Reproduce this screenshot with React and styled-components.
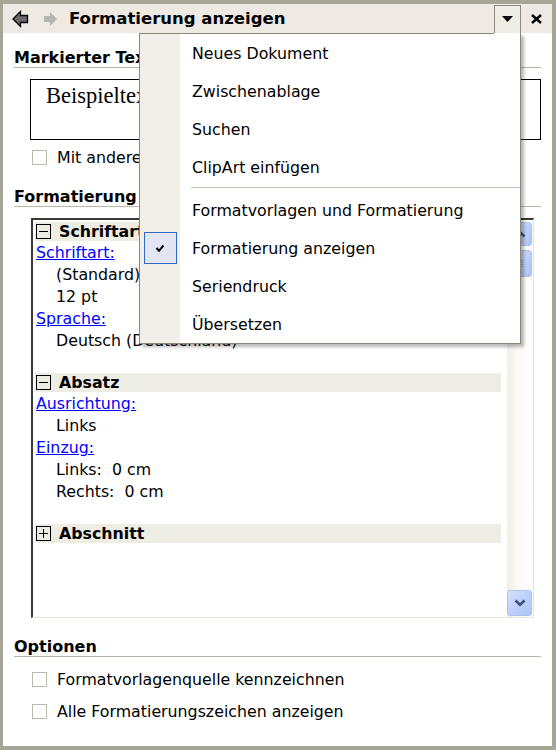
import React from 'react';
import styled, { createGlobalStyle } from 'styled-components';

const Global = createGlobalStyle`
  html, body { margin: 0; padding: 0; background: #A6A596; }
  body { font-family: "DejaVu Sans", Tahoma, sans-serif; }
`;

const Frame = styled.div`
  width: 556px;
  height: 750px;
  box-sizing: border-box;
  padding: 4px 4px 4px 3px;
  background: #A6A596;
`;

const Pane = styled.div`
  position: relative;
  height: 100%;
  background: #ffffff;
  display: flex;
  flex-direction: column;
  font-family: "DejaVu Sans", Tahoma, sans-serif;
  font-size: 15.8px;
  color: #000;
`;

const TitleBar = styled.div`
  height: 29px;
  flex: none;
  background: #EEEAE3;
  display: flex;
  align-items: center;
  padding-left: 9px;
`;

const NavIcon = styled.span`
  display: flex;
  width: 17px;
  height: 18px;
  margin-right: ${p => p.$gap}px;
`;

const Title = styled.div`
  flex: 1;
  font-weight: bold;
  font-size: 16.5px;
  white-space: nowrap;
`;

const DropButton = styled.div`
  align-self: flex-end;
  width: 27px;
  height: 28px;
  box-sizing: border-box;
  border: 1px solid #8E8B7E;
  border-bottom: none;
  background: #EEEDE4;
  display: flex;
  align-items: center;
  justify-content: center;
  position: relative;
  z-index: 3;
`;

const CloseBox = styled.div`
  width: 31px;
  display: flex;
  align-items: center;
  justify-content: center;
`;

const Body = styled.div`
  flex: 1;
  display: flex;
  flex-direction: column;
  padding: 0 11px;
`;

const Heading = styled.div`
  margin-top: ${p => p.$top}px;
  font-weight: bold;
  font-size: 16px;
  line-height: 18px;
  border-bottom: 1px solid #B8B5A8;
  white-space: nowrap;
  overflow: hidden;
`;

const SampleBox = styled.div`
  margin: 11px 0 0 16px;
  height: 61px;
  box-sizing: border-box;
  border: 1px solid #000;
  padding: 4px 15px 0;
  font-family: "Liberation Serif", "Times New Roman", serif;
  font-size: 22.5px;
  line-height: 24px;
`;

const CheckRow = styled.label`
  display: flex;
  align-items: center;
  margin-top: ${p => p.$top}px;
  margin-left: 18px;
  height: 16px;
  gap: 10px;
  white-space: nowrap;
`;

const Box = styled.span`
  width: 15px;
  height: 15px;
  box-sizing: border-box;
  border: 1px solid #BCB9AB;
  background: #fff;
  flex: none;
`;

const ListBox = styled.div`
  margin: 11px 7px 0 17px;
  height: 400px;
  box-sizing: border-box;
  border-top: 2px solid #3A3A36;
  border-left: 2px solid #3A3A36;
  border-right: 1px solid #E6E3D9;
  border-bottom: 1px solid #E6E3D9;
  display: flex;
`;

const ListContent = styled.div`
  flex: 1;
  padding: 2px 6px 0 2px;
  overflow: hidden;
`;

const SectionHead = styled.div`
  height: 19px;
  background: #EEEDE3;
  display: flex;
  align-items: center;
  font-weight: bold;
  gap: 8px;
  padding-left: 1px;
  white-space: nowrap;
`;

const Toggle = styled.span`
  width: 15px;
  height: 15px;
  box-sizing: border-box;
  border: 1px solid #000;
  position: relative;
  flex: none;
  &::before {
    content: '';
    position: absolute;
    left: 2px; right: 2px; top: 6px;
    height: 1px;
    background: #000;
  }
  &::after {
    content: '';
    display: ${p => (p.$plus ? 'block' : 'none')};
    position: absolute;
    top: 2px; bottom: 2px; left: 6px;
    width: 1px;
    background: #000;
  }
`;

const Line = styled.div`
  height: 22px;
  line-height: 24px;
  padding-left: ${p => (p.$indent ? 21 : 1)}px;
  white-space: pre;
`;

const Link = styled.a`
  color: #0000FF;
  text-decoration: underline;
`;

const ScrollBar = styled.div`
  width: 26px;
  flex: none;
  padding: 2px 1px 1px 0;
  box-sizing: border-box;
  background: linear-gradient(to right, #F1EEE6, #FBFAF6 40%, #FEFEFD);
  display: flex;
  flex-direction: column;
  gap: 4px;
`;

const ScrollBtn = styled.div`
  height: ${p => p.$h}px;
  box-sizing: border-box;
  border: 1px solid #AFC2EE;
  border-radius: 3px;
  background: linear-gradient(135deg, #D6E2FD 0%, #BED0FA 50%, #AFC5F5 100%);
  display: flex;
  align-items: center;
  justify-content: center;
`;

const Spacer = styled.div`
  flex: 1;
`;

const Menu = styled.div`
  position: absolute;
  left: 136px;
  top: 29px;
  width: 382px;
  height: 311px;
  box-sizing: border-box;
  border: 1px solid #8A8678;
  border-top: none;
  padding-top: 1px;
  background: linear-gradient(to right, #F1EFE7 0 40px, #FFFFFF 40px);
  box-shadow: 3px 3px 3px rgba(0, 0, 0, 0.28);
  z-index: 2;
  &::before {
    content: '';
    position: absolute;
    top: 0;
    left: -1px;
    right: 26px;
    height: 1px;
    background: #8A8678;
  }
`;

const MenuItem = styled.div`
  height: 38px;
  display: flex;
  align-items: center;
  white-space: nowrap;
`;

const IconSlot = styled.span`
  width: 40px;
  height: 100%;
  display: flex;
  align-items: center;
  justify-content: center;
  flex: none;
`;

const CheckMark = styled.span`
  width: 33px;
  height: 32px;
  box-sizing: border-box;
  border: 1px solid #316AC5;
  background: #E2E6F3;
  display: flex;
  align-items: center;
  justify-content: center;
`;

const MenuLabel = styled.span`
  padding-left: 12px;
`;

const Separator = styled.div`
  height: 5px;
  box-sizing: border-box;
  padding-top: 1px;
  margin-left: 51px;
  &::before {
    content: '';
    display: block;
    height: 1px;
    background: #C5C2B8;
  }
`;

const BackArrow = () => (
  <svg width="17" height="18" viewBox="0 0 17 18">
    <polygon points="1,9 8.5,1.5 8.5,5.5 15.5,5.5 15.5,12.5 8.5,12.5 8.5,16.5" fill="#6A6A6A" stroke="#000" strokeWidth="1.3" strokeLinejoin="miter" />
  </svg>
);

const FwdArrow = () => (
  <svg width="17" height="18" viewBox="0 0 17 18">
    <polygon points="15,9 8,2 8,6 2,6 2,12 8,12 8,16" fill="#B4B4B0" />
  </svg>
);

const DownTri = () => (
  <svg width="11" height="7" viewBox="0 0 11 7">
    <polygon points="0,0 11,0 5.5,6" fill="#000" />
  </svg>
);

const CloseX = () => (
  <svg width="11" height="10" viewBox="0 0 11 10">
    <path d="M1 1 L10 9 M10 1 L1 9" stroke="#000" strokeWidth="2.4" />
  </svg>
);

const Chevron = ({ up }) => (
  <svg width="12" height="8" viewBox="0 0 12 8">
    <path d={up ? 'M1.5 6.5 L6 2.2 L10.5 6.5' : 'M1.5 1.5 L6 5.8 L10.5 1.5'} fill="none" stroke="#3D5073" strokeWidth="2.6" />
  </svg>
);

const Grip = () => (
  <svg width="9" height="9" viewBox="0 0 9 9">
    {[1, 3, 5, 7].map(y => (
      <rect key={y} x="1" y={y} width="7" height="1" fill="#8DA6DD" />
    ))}
  </svg>
);

const Tick = () => (
  <svg width="10" height="9" viewBox="0 0 10 9">
    <path d="M1.5 4 L4 6.8 L8.5 1.5" fill="none" stroke="#000" strokeWidth="2" />
  </svg>
);

const topItems = ['Neues Dokument', 'Zwischenablage', 'Suchen', 'ClipArt einfügen'];
const bottomItems = [
  { label: 'Formatvorlagen und Formatierung' },
  { label: 'Formatierung anzeigen', checked: true },
  { label: 'Seriendruck' },
  { label: 'Übersetzen' },
];

export default function App() {
  return (
    <>
      <Global />
      <Frame>
        <Pane>
          <TitleBar>
            <NavIcon $gap={13}><BackArrow /></NavIcon>
            <NavIcon $gap={10}><FwdArrow /></NavIcon>
            <Title>Formatierung anzeigen</Title>
            <DropButton><DownTri /></DropButton>
            <CloseBox><CloseX /></CloseBox>
          </TitleBar>

          <Body>
            <Heading $top={16}>Markierter Text</Heading>
            <SampleBox>Beispieltext</SampleBox>
            <CheckRow $top={9}><Box />Mit anderer Auswahl vergleichen</CheckRow>

            <Heading $top={23}>Formatierung des markierten Texts</Heading>
            <ListBox>
              <ListContent>
                <SectionHead><Toggle />Schriftart</SectionHead>
                <Line><Link>Schriftart:</Link></Line>
                <Line $indent>(Standard) Times New Roman</Line>
                <Line $indent>12 pt</Line>
                <Line><Link>Sprache:</Link></Line>
                <Line $indent>Deutsch (Deutschland)</Line>
                <Line> </Line>
                <SectionHead><Toggle />Absatz</SectionHead>
                <Line><Link>Ausrichtung:</Link></Line>
                <Line $indent>Links</Line>
                <Line><Link>Einzug:</Link></Line>
                <Line $indent>Links:  0 cm</Line>
                <Line $indent>Rechts:  0 cm</Line>
                <Line> </Line>
                <SectionHead><Toggle $plus />Abschnitt</SectionHead>
              </ListContent>
              <ScrollBar>
                <ScrollBtn $h={24}><Chevron up /></ScrollBtn>
                <ScrollBtn $h={27}><Grip /></ScrollBtn>
                <Spacer />
                <ScrollBtn $h={26}><Chevron /></ScrollBtn>
              </ScrollBar>
            </ListBox>

            <Heading $top={20}>Optionen</Heading>
            <CheckRow $top={14}><Box />Formatvorlagenquelle kennzeichnen</CheckRow>
            <CheckRow $top={16}><Box />Alle Formatierungszeichen anzeigen</CheckRow>
          </Body>

          <Menu>
            {topItems.map(t => (
              <MenuItem key={t}><IconSlot /><MenuLabel>{t}</MenuLabel></MenuItem>
            ))}
            <Separator />
            {bottomItems.map(it => (
              <MenuItem key={it.label}>
                <IconSlot>{it.checked && <CheckMark><Tick /></CheckMark>}</IconSlot>
                <MenuLabel>{it.label}</MenuLabel>
              </MenuItem>
            ))}
          </Menu>
        </Pane>
      </Frame>
    </>
  );
}
